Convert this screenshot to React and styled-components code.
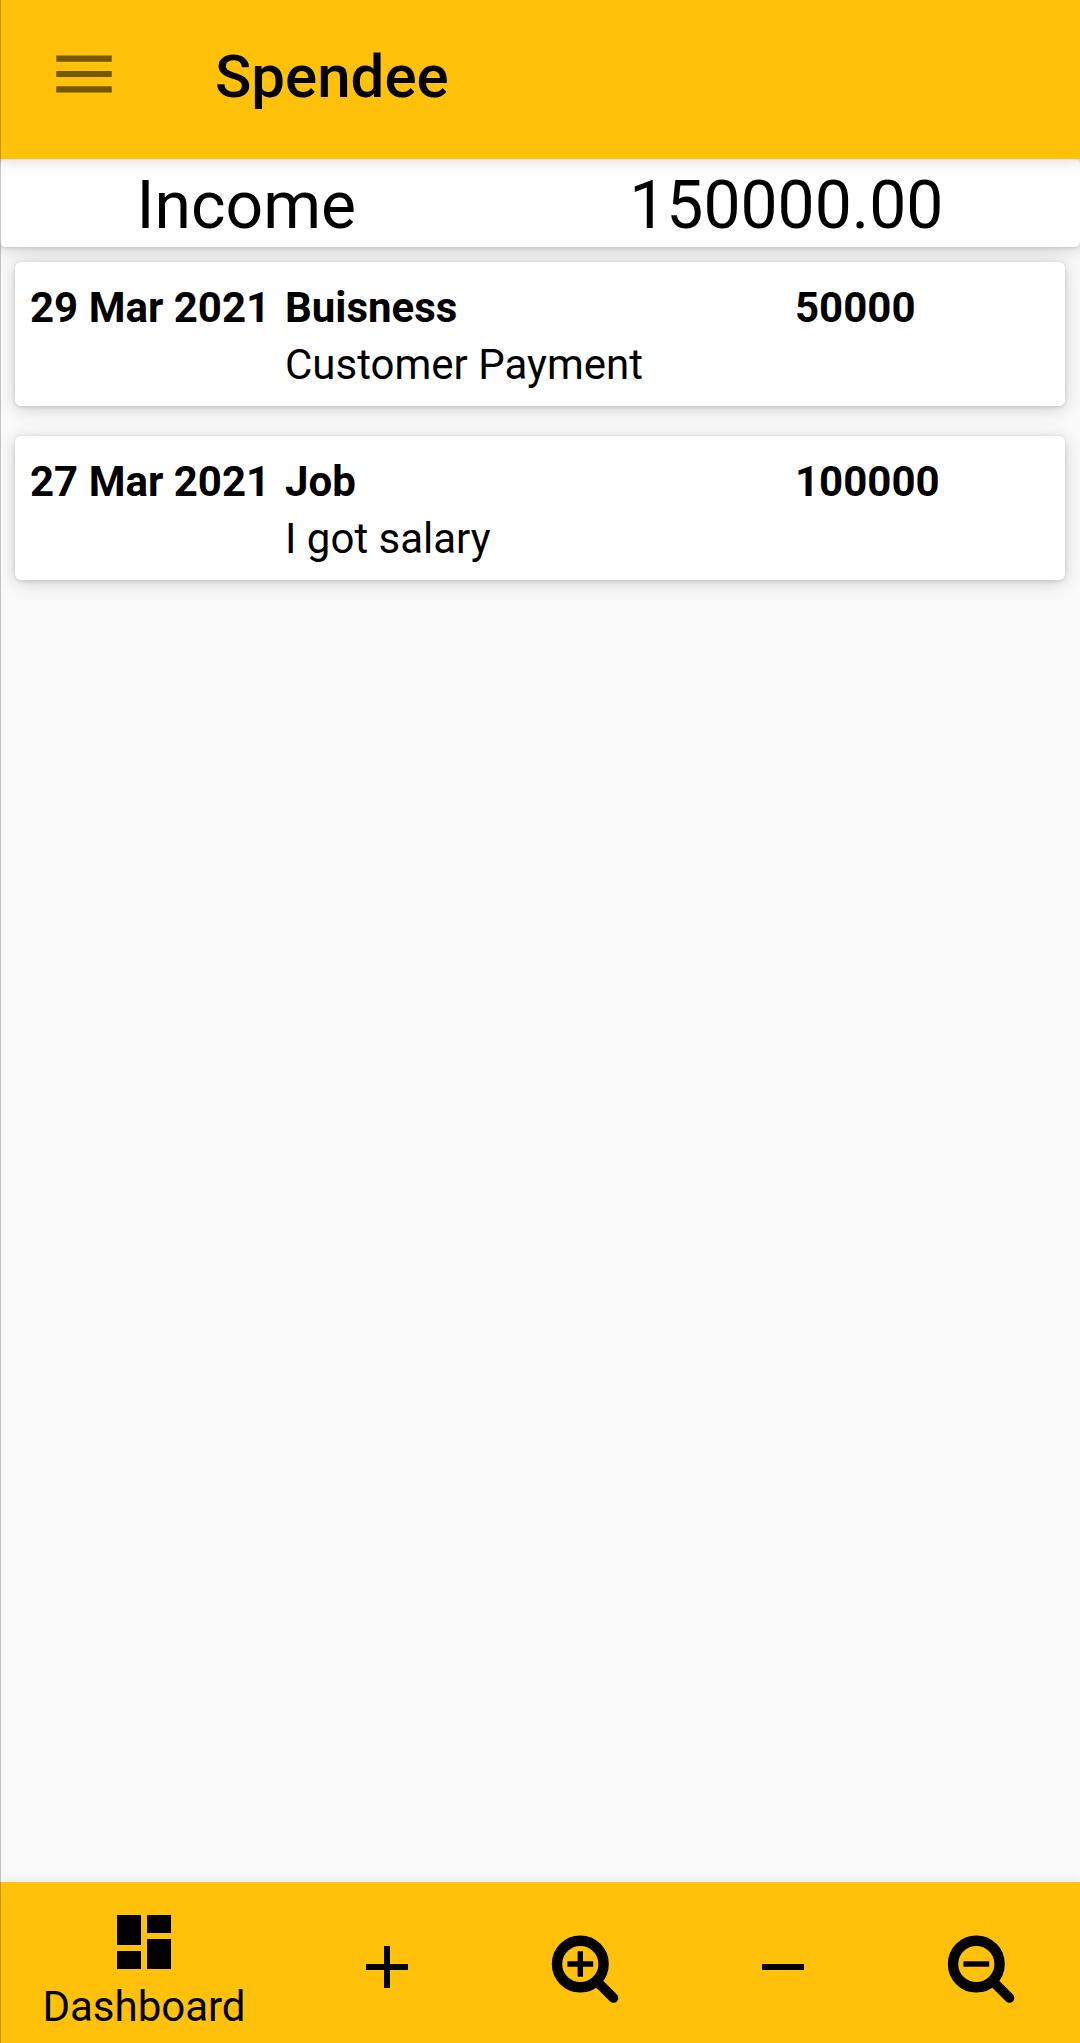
import React from "react";
import styled, { createGlobalStyle } from "styled-components";

const GlobalStyle = createGlobalStyle`
  *, *::before, *::after { box-sizing: border-box; }
  body { margin: 0; background: #fafafa; }
`;

const Screen = styled.div`
  position: relative;
  display: flex;
  flex-direction: column;
  min-height: 100vh;
  background: #fafafa;
  color: #000;
  font-family: Roboto, "Liberation Sans", sans-serif;
  font-size: 42px;

  /* thin edge of the closed side drawer */
  &::after {
    content: "";
    position: absolute;
    inset: 0 auto 0 0;
    z-index: 3;
    width: 1px;
    background: rgba(0, 0, 0, 0.22);
    pointer-events: none;
  }
`;

const AppBar = styled.header`
  position: relative;
  z-index: 2;
  display: flex;
  align-items: center;
  gap: 94px;
  height: 159px;
  padding: 0 47px 12px;
  background: #ffc109;
  box-shadow: 0 3px 12px rgba(0, 0, 0, 0.14);
`;

const BarButton = styled.button`
  display: flex;
  align-items: center;
  justify-content: center;
  padding: 0;
  border: 0;
  background: none;
  color: inherit;
  font: inherit;
  cursor: pointer;
`;

const MenuButton = styled(BarButton)`
  color: rgba(0, 0, 0, 0.54);
`;

const Title = styled.h1`
  margin: 0;
  padding-top: 6px;
  font-size: 60px;
  font-weight: 500;
  line-height: 72px;
`;

const cardShadow = `
  0 1px 4px rgba(0, 0, 0, 0.14),
  0 3px 18px rgba(0, 0, 0, 0.17)
`;

const Summary = styled.section`
  display: flex;
  justify-content: space-around;
  padding-top: 6px;
  border-radius: 6px;
  background: #fff;
  box-shadow: ${cardShadow};
  font-size: 66px;
  line-height: 82px;
`;

const Main = styled.main`
  flex: 1;
`;

const Transactions = styled.ul`
  display: flex;
  flex-direction: column;
  gap: 30px;
  margin: 0;
  padding: 15px;
  list-style: none;
`;

const Card = styled.li`
  display: grid;
  grid-template-columns: 1fr 2fr 1fr;
  padding: 17px 15px 13px;
  border-radius: 6px;
  background: #fff;
  box-shadow: ${cardShadow};
  line-height: 57px;
  white-space: nowrap;
`;

const Strong = styled.span`
  font-weight: 700;
`;

const Note = styled.span`
  grid-column: 2;
`;

const BottomBar = styled.nav`
  position: relative;
  z-index: 2;
  display: grid;
  grid-template-columns: 16fr repeat(4, 11fr);
  padding: 24px 0 7px;
  background: #ffc109;
  box-shadow: 0 0 12px rgba(0, 0, 0, 0.1);
`;

const TabButton = styled(BarButton)`
  flex-direction: column;
  line-height: 58px;
`;

const ActionButton = styled(BarButton)`
  padding-bottom: 8px;
`;

const Glyph = styled.svg`
  display: block;
  width: ${(p) => p.$size}px;
  height: ${(p) => p.$size}px;
  fill: currentColor;
`;

function Icon({ d, size = 72 }) {
  return (
    <Glyph $size={size} viewBox="0 0 24 24" aria-hidden="true">
      <path d={d} />
    </Glyph>
  );
}

function Magnifier({ plus }) {
  return (
    <Glyph $size={72} viewBox="0 0 72 72" aria-hidden="true">
      <g fill="none" stroke="currentColor">
        <circle cx="31.3" cy="33" r="23.3" strokeWidth="10.4" />
        <path d="M48 50.5 64.5 67" strokeWidth="9.6" strokeLinecap="round" />
        <path
          d={plus ? "M18.4 33H44.2M31.3 20.2V45.8" : "M18.4 33H44.2"}
          strokeWidth="5.4"
        />
      </g>
    </Glyph>
  );
}

const transactions = [
  { date: "29 Mar 2021", category: "Buisness", amount: 50000, note: "Customer Payment" },
  { date: "27 Mar 2021", category: "Job", amount: 100000, note: "I got salary" },
];

export default function App() {
  return (
    <Screen>
      <GlobalStyle />
      <AppBar>
        <MenuButton type="button" aria-label="Menu">
          <Icon size={74} d="M3 18h18v-2H3v2zm0-5h18v-2H3v2zm0-7v2h18V6H3z" />
        </MenuButton>
        <Title>Spendee</Title>
      </AppBar>
      <Main>
        <Summary>
          <span>Income</span>
          <span>150000.00</span>
        </Summary>
        <Transactions>
          {transactions.map((t) => (
            <Card key={t.date}>
              <Strong>{t.date}</Strong>
              <Strong>{t.category}</Strong>
              <Strong>{t.amount}</Strong>
              <Note>{t.note}</Note>
            </Card>
          ))}
        </Transactions>
      </Main>
      <BottomBar>
        <TabButton type="button">
          <Icon d="M3 13h8V3H3v10zm0 8h8v-6H3v6zm10 0h8V11h-8v10zm0-18v6h8V3h-8z" />
          <span>Dashboard</span>
        </TabButton>
        <ActionButton type="button" aria-label="Add income">
          <Icon d="M19 13h-6v6h-2v-6H5v-2h6V5h2v6h6v2z" />
        </ActionButton>
        <ActionButton type="button" aria-label="View income">
          <Magnifier plus />
        </ActionButton>
        <ActionButton type="button" aria-label="Add expense">
          <Icon d="M19 13H5v-2h14v2z" />
        </ActionButton>
        <ActionButton type="button" aria-label="View expenses">
          <Magnifier />
        </ActionButton>
      </BottomBar>
    </Screen>
  );
}
